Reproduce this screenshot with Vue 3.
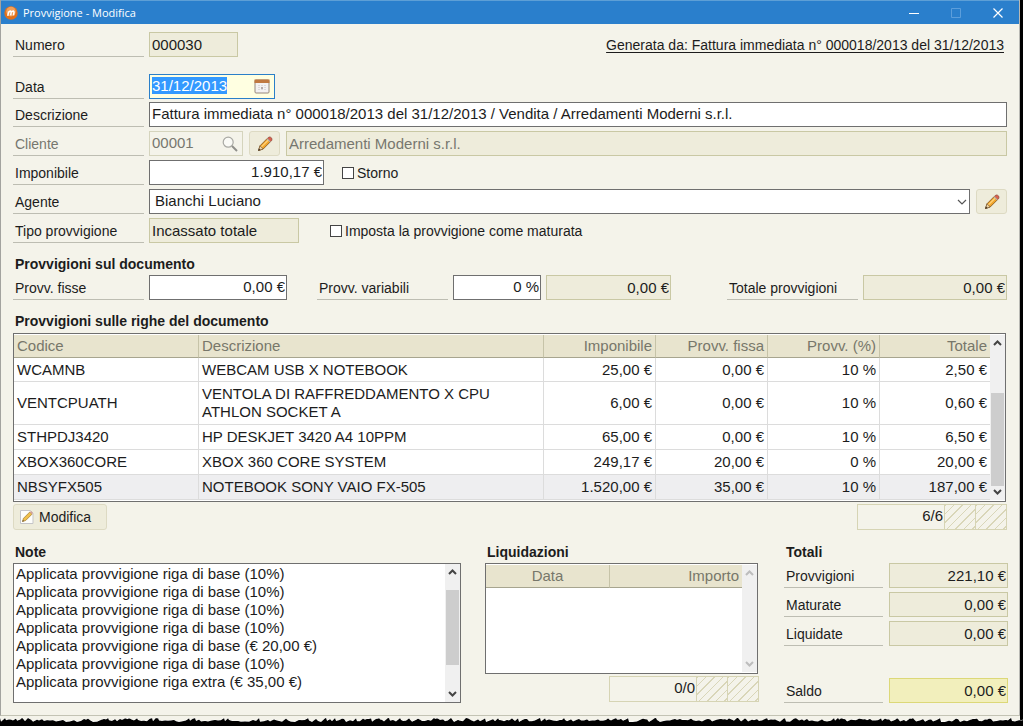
<script setup>
import { onMounted, ref } from 'vue'

const dateInput = ref(null)
const date = ref('31/12/2013')
const description = ref('Fattura immediata n° 000018/2013 del 31/12/2013 / Vendita / Arredamenti Moderni s.r.l.')
const taxable = ref('1.910,17 €')
const agent = ref('Bianchi Luciano')
const reversal = ref(false)
const matured = ref(false)
const fixedFee = ref('0,00 €')
const variableFee = ref('0 %')

const rows = [
  { code: 'WCAMNB', text: 'WEBCAM USB X NOTEBOOK', base: '25,00 €', fixed: '0,00 €', rate: '10 %', total: '2,50 €' },
  { code: 'VENTCPUATH', text: 'VENTOLA DI RAFFREDDAMENTO X CPU ATHLON SOCKET A', base: '6,00 €', fixed: '0,00 €', rate: '10 %', total: '0,60 €' },
  { code: 'STHPDJ3420', text: 'HP DESKJET 3420 A4 10PPM', base: '65,00 €', fixed: '0,00 €', rate: '10 %', total: '6,50 €' },
  { code: 'XBOX360CORE', text: 'XBOX 360 CORE SYSTEM', base: '249,17 €', fixed: '20,00 €', rate: '0 %', total: '20,00 €' },
  { code: 'NBSYFX505', text: 'NOTEBOOK SONY VAIO FX-505', base: '1.520,00 €', fixed: '35,00 €', rate: '10 %', total: '187,00 €', current: true },
]

const notes = ref([
  'Applicata provvigione riga di base (10%)',
  'Applicata provvigione riga di base (10%)',
  'Applicata provvigione riga di base (10%)',
  'Applicata provvigione riga di base (10%)',
  'Applicata provvigione riga di base (€ 20,00 €)',
  'Applicata provvigione riga di base (10%)',
  'Applicata provvigione riga extra (€ 35,00 €)',
].join('\n'))

const totals = [
  { id: 'tot-provvigioni', label: 'Provvigioni', value: '221,10 €' },
  { id: 'tot-maturate', label: 'Maturate', value: '0,00 €' },
  { id: 'tot-liquidate', label: 'Liquidate', value: '0,00 €' },
  { id: 'tot-saldo', label: 'Saldo', value: '0,00 €', balance: true },
]

// Ragged edge: uneven teeth along the bottom of the window.
function ragged(low, high) {
  let d = 'M0 9'
  for (let x = 0, i = 0; x <= 1023; i++) {
    const noise = Math.abs(Math.sin(i * 12.9898) * 43758.5453) % 1
    d += ` L${x} ${(low + noise * (high - low)).toFixed(1)}`
    x += 1 + Math.round(noise * 3)
  }
  return d + ' L1023 4 L1023 9 Z'
}
const tear = ragged(2, 6)

onMounted(() => {
  dateInput.value.focus()
  dateInput.value.select()
})
</script>

<template>
  <div class="screen">
    <main class="window">
      <header class="titlebar">
        <svg class="logo" viewBox="0 0 14 14" aria-hidden="true">
          <circle cx="7" cy="7" r="6.7" fill="#e0701c" />
          <circle cx="7" cy="5.6" r="4.8" fill="#f2a05a" />
          <path d="M3.8 9.8 L4.6 5.6 M4.5 6.6 Q6.8 3.8 7.2 6 L6.7 9.4 M7.1 6.6 Q9.8 3.8 10 6.2 L9.5 9.4" fill="none" stroke="#fff" stroke-width="1.5" />
        </svg>
        <h1>Provvigione - Modifica</h1>
        <button type="button" class="winbtn" aria-label="Riduci a icona">
          <svg viewBox="0 0 12 12"><path d="M1 6.5H11" stroke="#fff" fill="none" /></svg>
        </button>
        <button type="button" class="winbtn" aria-label="Ingrandisci" disabled>
          <svg viewBox="0 0 12 12"><path d="M1.5 1.5H10.5V10.5H1.5Z" stroke="#5c9edb" fill="none" /></svg>
        </button>
        <button type="button" class="winbtn" aria-label="Chiudi">
          <svg viewBox="0 0 12 12"><path d="M1.5 1.5L10.5 10.5M10.5 1.5L1.5 10.5" stroke="#fff" stroke-width="1.2" fill="none" /></svg>
        </button>
      </header>

      <form class="form" @submit.prevent>
        <div class="row first">
          <label class="lbl" for="numero">Numero</label>
          <input id="numero" class="box w-num" value="000030" readonly />
          <a class="source" href="#">Generata da: Fattura immediata n° 000018/2013 del 31/12/2013</a>
        </div>

        <div class="rows">
          <div class="row">
            <label class="lbl" for="data">Data</label>
            <div class="date">
              <input id="data" ref="dateInput" v-model="date" />
              <button type="button" class="bare" aria-label="Apri calendario">
                <svg width="16" height="15" viewBox="0 0 16 15">
                  <rect x="1" y="1" width="14" height="13" rx="1" fill="#f3f1f1" stroke="#96877c" />
                  <path d="M0.5 0.5H15.5V4H0.5Z" fill="#c07840" />
                  <path d="M4 6.5H12M4 8.5H12M4 10.5H12" stroke="#dcd8da" stroke-dasharray="2 1" />
                  <path d="M7 8H9V10H7Z" fill="#b3a9a9" />
                </svg>
              </button>
            </div>
          </div>
          <div class="row">
            <label class="lbl" for="descrizione">Descrizione</label>
            <input id="descrizione" v-model="description" class="box edit grow" />
          </div>
          <div class="row">
            <label class="lbl off" for="cliente">Cliente</label>
            <div class="lookup">
              <input id="cliente" value="00001" disabled />
              <button type="button" class="bare" aria-label="Cerca cliente" disabled>
                <svg width="16" height="16" viewBox="0 0 16 16">
                  <circle cx="6.2" cy="6.2" r="5" fill="#fafaf6" stroke="#a9a9a4" stroke-width="1.2" />
                  <path d="M10 10L15 15" stroke="#8f8f8b" stroke-width="2" />
                </svg>
              </button>
            </div>
            <button type="button" class="btn pen" aria-label="Modifica cliente">
              <svg width="16" height="16" viewBox="0 0 16 16">
                <path d="M1.5 14.5L3 9.8L10.3 2.4L13.6 5.6L6.2 13Z" fill="#f0a52c" stroke="#8a5a20" stroke-width="0.9" />
                <path d="M4.4 10.9L11.6 3.7" stroke="#ffd27a" stroke-width="1.3" />
                <path d="M10.3 2.4L12 1Q13.2 0.6 14.4 1.8Q15.4 3 14.8 4.3L13.6 5.6Z" fill="#d9604f" stroke="#8c4a3c" stroke-width="0.7" />
                <path d="M9.6 3.1L10.4 2.3L13.7 5.5L12.9 6.3Z" fill="#b9b4ad" />
                <path d="M1.5 14.5L3 9.8L6.2 13Z" fill="#eed3a2" stroke="#6c5030" stroke-width="0.6" />
                <path d="M1.2 14.8L2 12.4L3.6 14Z" fill="#3b3028" />
              </svg>
            </button>
            <input class="box grow off" value="Arredamenti Moderni s.r.l." aria-label="Nome cliente" disabled />
          </div>
          <div class="row">
            <label class="lbl" for="imponibile">Imponibile</label>
            <input id="imponibile" v-model="taxable" class="box edit num w-tax" />
            <label class="check storno"><input v-model="reversal" type="checkbox" />Storno</label>
          </div>
          <div class="row">
            <label class="lbl" for="agente">Agente</label>
            <div class="select grow">
              <select id="agente" v-model="agent">
                <option>Bianchi Luciano</option>
              </select>
              <svg width="10" height="6" viewBox="0 0 10 6" aria-hidden="true"><path d="M1 1L5 5L9 1" fill="none" stroke="#555" stroke-width="1.2" /></svg>
            </div>
            <button type="button" class="btn pen" aria-label="Modifica agente">
              <svg width="16" height="16" viewBox="0 0 16 16">
                <path d="M1.5 14.5L3 9.8L10.3 2.4L13.6 5.6L6.2 13Z" fill="#f0a52c" stroke="#8a5a20" stroke-width="0.9" />
                <path d="M4.4 10.9L11.6 3.7" stroke="#ffd27a" stroke-width="1.3" />
                <path d="M10.3 2.4L12 1Q13.2 0.6 14.4 1.8Q15.4 3 14.8 4.3L13.6 5.6Z" fill="#d9604f" stroke="#8c4a3c" stroke-width="0.7" />
                <path d="M9.6 3.1L10.4 2.3L13.7 5.5L12.9 6.3Z" fill="#b9b4ad" />
                <path d="M1.5 14.5L3 9.8L6.2 13Z" fill="#eed3a2" stroke="#6c5030" stroke-width="0.6" />
                <path d="M1.2 14.8L2 12.4L3.6 14Z" fill="#3b3028" />
              </svg>
            </button>
          </div>
          <div class="row">
            <label class="lbl" for="tipo">Tipo provvigione</label>
            <input id="tipo" class="box w-type" value="Incassato totale" readonly />
            <label class="check matured"><input v-model="matured" type="checkbox" />Imposta la provvigione come maturata</label>
          </div>
        </div>

        <h2>Provvigioni sul documento</h2>
        <div class="row">
          <label class="lbl" for="fisse">Provv. fisse</label>
          <input id="fisse" v-model="fixedFee" class="box edit num w-fix" />
          <label class="lbl second" for="variabili">Provv. variabili</label>
          <input id="variabili" v-model="variableFee" class="box edit num w-pct" />
          <input class="box num w-var" value="0,00 €" aria-label="Importo provvigioni variabili" readonly />
          <label class="lbl third" for="totale">Totale provvigioni</label>
          <input id="totale" class="box num w-sum" value="0,00 €" readonly />
        </div>

        <h2>Provvigioni sulle righe del documento</h2>
        <div class="grid lines">
          <table>
            <colgroup>
              <col class="c-code" /><col /><col class="c-num" /><col class="c-num" /><col class="c-num" /><col class="c-total" />
            </colgroup>
            <thead>
              <tr>
                <th>Codice</th><th>Descrizione</th><th class="num">Imponibile</th><th class="num">Provv. fissa</th><th class="num">Provv. (%)</th><th class="num">Totale</th>
              </tr>
            </thead>
            <tbody>
              <tr v-for="r in rows" :key="r.code" :class="{ current: r.current }">
                <td>{{ r.code }}</td><td>{{ r.text }}</td><td class="num">{{ r.base }}</td><td class="num">{{ r.fixed }}</td><td class="num">{{ r.rate }}</td><td class="num">{{ r.total }}</td>
              </tr>
            </tbody>
          </table>
          <div class="bar" aria-hidden="true">
            <svg width="9" height="6" viewBox="0 0 9 6"><path d="M1 5L4.5 1.5L8 5" /></svg>
            <div class="track t-lines"><div class="thumb" /></div>
            <svg width="9" height="6" viewBox="0 0 9 6"><path d="M1 1L4.5 4.5L8 1" /></svg>
          </div>
        </div>

        <div class="under">
          <button type="button" class="btn edit-btn">
            <svg width="16" height="16" viewBox="0 0 16 16" aria-hidden="true">
              <path d="M1.5 1.5H11.5L14 4V14.5H1.5Z" fill="#fdfdfb" stroke="#c5c5c8" />
              <path d="M3.5 12.5L4.5 9.3L10.8 3L13 5.2L6.7 11.5Z" fill="#f0c04c" stroke="#a98338" stroke-width="0.8" />
              <path d="M10.8 3L12 2L14 4L13 5.2Z" fill="#d5a197" />
              <path d="M3.3 12.7L3.9 10.9L5.1 12.1Z" fill="#55483a" />
            </svg>
            Modifica
          </button>
          <div class="pager"><span>6/6</span><i /><i /></div>
        </div>

        <div class="bottom">
          <section class="notes">
            <h2><label for="note">Note</label></h2>
            <div class="grid note-box">
              <textarea id="note" v-model="notes" />
              <div class="bar" aria-hidden="true">
                <svg width="9" height="6" viewBox="0 0 9 6"><path d="M1 5L4.5 1.5L8 5" /></svg>
                <div class="track t-notes"><div class="thumb" /></div>
                <svg width="9" height="6" viewBox="0 0 9 6"><path d="M1 1L4.5 4.5L8 1" /></svg>
              </div>
            </div>
          </section>

          <section class="payments">
            <h2>Liquidazioni</h2>
            <div class="grid pay-box">
              <div class="pay-area">
                <table>
                  <colgroup><col class="c-date" /><col /></colgroup>
                  <thead>
                    <tr><th class="mid">Data</th><th class="num">Importo</th></tr>
                  </thead>
                </table>
              </div>
              <div class="bar idle" aria-hidden="true">
                <svg width="9" height="6" viewBox="0 0 9 6"><path d="M1 5L4.5 1.5L8 5" /></svg>
                <div class="track" />
                <svg width="9" height="6" viewBox="0 0 9 6"><path d="M1 1L4.5 4.5L8 1" /></svg>
              </div>
            </div>
            <div class="pager"><span>0/0</span><i /><i /></div>
          </section>

          <section class="totals">
            <h2>Totali</h2>
            <div class="total-rows">
              <div v-for="t in totals" :key="t.id" class="row" :class="{ balance: t.balance }">
                <label class="lbl" :for="t.id">{{ t.label }}</label>
                <input :id="t.id" class="box num grow" :value="t.value" readonly />
              </div>
            </div>
          </section>
        </div>
      </form>
    </main>
    <svg class="tear" viewBox="0 0 1023 9" preserveAspectRatio="none" aria-hidden="true">
      <rect width="1020" height="9" fill="#f4f3ea" />
      <rect x="1020" width="3" height="9" fill="#000" />
      <path :d="tear" fill="#000" stroke="#fff" stroke-width="1" />
      <path :d="tear" fill="#000" />
    </svg>
  </div>
</template>

<style>
body {
  background: #000;
}
</style>

<style scoped>
.screen,
.screen * {
  box-sizing: border-box;
}
.screen {
  font-family: "Liberation Sans", Arial, sans-serif;
  font-size: 14px;
  color: #1c1c1c;
}
.window {
  margin-right: 3px;
  background: #f4f3ea;
  border-left: 1px solid #a3a39f;
  border-right: 1px solid #b9b9b4;
  border-bottom: 1px solid #c3c3b4;
}
.titlebar {
  display: flex;
  align-items: center;
  height: 24px;
  padding: 0 10px 0 3px;
  background: #2a7fcc;
  border-top: 1px solid #5d9fd6;
}
.logo {
  width: 14px;
  height: 14px;
  margin-right: 5px;
}
h1 {
  flex: 1;
  margin: 0;
  font: 400 11px/16px "Open Sans", "Noto Sans", sans-serif;
  color: #fff;
}
button {
  margin: 0;
  padding: 0;
  border: 0;
  font: inherit;
  color: inherit;
  background: none;
}
.winbtn {
  display: flex;
  align-items: center;
  justify-content: center;
  width: 22px;
  height: 22px;
  margin-left: 20px;
}
.winbtn svg {
  width: 12px;
  height: 12px;
}
.form {
  padding: 8px 12px 12px;
}
.row {
  display: flex;
  height: 25px;
}
.row.first {
  margin-bottom: 17px;
}
.rows {
  display: flex;
  flex-direction: column;
  gap: 4px;
}
.rows .row:first-child {
  margin-bottom: -1px;
}
.lbl {
  flex: none;
  width: 131px;
  margin-right: 5px;
  padding-left: 2px;
  border-bottom: 1px solid #bdbdb2;
  line-height: 26px;
  white-space: nowrap;
}
.off,
.lbl.off {
  color: #77776f;
}
.box {
  min-width: 0;
  height: 25px;
  margin: 0;
  padding: 0 1px 0 2px;
  border: 1px solid #c9c8a4;
  border-radius: 0;
  outline: 0;
  background: #eeecdb;
  font: 15px/18px "Liberation Sans", Arial, sans-serif;
  color: #1c1c1c;
}
.box.off {
  color: #77776f;
}
.box.edit {
  padding-bottom: 2px;
  border-color: #6f6f6f;
  background: #fff;
}
.num {
  text-align: right;
}
.grow {
  flex: 1;
}
.w-num { width: 89px; }
.w-tax { width: 175px; }
.w-type { width: 150px; }
.w-fix { width: 138px; }
.w-pct { width: 88px; }
.w-var { width: 125px; margin-left: 5px; }
.w-sum { width: 144px; }
.source {
  margin: 0 3px 0 auto;
  line-height: 26px;
  color: #1c1c1c;
  text-underline-offset: 2px;
}
.date,
.lookup {
  display: flex;
  align-items: center;
  height: 25px;
  padding: 0 4px 0 2px;
}
.date {
  width: 126px;
  border: 1px solid #2a7fc9;
  background: #ffffe1;
}
.lookup {
  width: 94px;
  border: 1px solid #d5d4bd;
}
.date input,
.lookup input {
  flex: 1;
  min-width: 0;
  height: 20px;
  padding: 0 0 2px;
  border: 0;
  outline: 0;
  background: none;
  font: 15px/18px "Liberation Sans", Arial, sans-serif;
  color: #1c1c1c;
}
.lookup input {
  color: #77776f;
}
.date input::selection {
  background: #3399ff;
  color: #fff;
}
.bare,
.bare svg {
  display: block;
}
.btn {
  display: flex;
  align-items: center;
  border: 1px solid #dddac3;
  border-radius: 3px;
  background: #eeecdb;
}
.pen {
  justify-content: center;
  width: 31px;
  margin: 0 6px;
}
.pen:last-child {
  margin-right: 0;
}
.check {
  display: flex;
  align-items: center;
  gap: 3px;
}
.storno { margin-left: 18px; }
.matured { margin-left: 31px; }
.check input {
  appearance: none;
  width: 12px;
  height: 12px;
  margin: 0;
  border: 1px solid #444;
  background: #fff;
}
.select {
  position: relative;
}
.select select {
  display: block;
  width: 100%;
  height: 25px;
  padding: 0 24px 2px 5px;
  appearance: none;
  border: 1px solid #6f6f6f;
  border-radius: 0;
  background: #fff;
  font: 15px/18px "Liberation Sans", Arial, sans-serif;
  color: #1c1c1c;
}
.select svg {
  position: absolute;
  top: 10px;
  right: 3px;
  pointer-events: none;
}
h2 {
  margin: 12px 0 2px;
  padding-left: 2px;
  font-size: 14px;
  line-height: 18px;
  font-weight: 700;
}
.lbl.second {
  margin-left: 30px;
}
.lbl.third {
  margin-left: auto;
}
.grid {
  display: flex;
  border: 1px solid #6f6f6f;
  background: #fff;
}
.lines {
  margin: 3px 1px 0 0;
  padding: 1px 0;
}
table {
  flex: 1;
  width: 100%;
  table-layout: fixed;
  border-collapse: separate;
  border-spacing: 0;
  font-size: 15px;
}
.c-code { width: 185px; }
.c-num { width: 112px; }
.c-total { width: 110px; }
.c-date { width: 124px; }
th,
td {
  height: 25px;
  padding: 0 3px;
  border-right: 1px solid #dcdcdc;
  border-bottom: 1px solid #dcdcdc;
  font-weight: 400;
  line-height: 18px;
  text-align: left;
}
th {
  height: 23px;
  border-color: #c6c3a8;
  border-bottom-color: #a7a58f;
  background: #e8e4ce;
  color: #77776a;
}
th.num,
td.num {
  text-align: right;
}
th.mid {
  text-align: center;
}
th:last-child,
td:last-child {
  border-right: 0;
}
tbody tr:nth-child(1) td {
  height: 24px;
}
tbody tr:nth-child(2) td {
  height: 43px;
}
.current td {
  background: #eeeef0;
}
.bar {
  display: flex;
  flex: none;
  flex-direction: column;
  align-items: center;
  width: 15px;
  padding: 5px 0;
  background: #f0f0f0;
}
.bar svg path {
  fill: none;
  stroke: #444;
  stroke-width: 2;
}
.bar.idle svg path {
  stroke: #bdbdbd;
}
.track {
  display: flex;
  flex: 1;
  flex-direction: column;
  width: 13px;
}
.thumb {
  background: #cdcdcd;
  flex: 1;
}
.t-lines {
  padding-top: 47px;
  padding-bottom: 3px;
}
.t-notes {
  padding-top: 15px;
  padding-bottom: 26px;
}
.under {
  display: flex;
  justify-content: space-between;
  margin-top: 2px;
}
.edit-btn {
  width: 94px;
  height: 26px;
  gap: 4px;
  padding-left: 5px;
}
.pager {
  display: flex;
  width: 150px;
  height: 26px;
  border: 1px solid #d6d4b4;
}
.pager span {
  flex: 1;
  padding-right: 1px;
  font-size: 15px;
  line-height: 21px;
  text-align: right;
}
.pager i {
  width: 31px;
  border-left: 1px solid #d6d4b4;
  background: repeating-linear-gradient(135deg, #d9d6b8 0 1px, #f4f3ea 1px 6px);
}
.bottom {
  display: flex;
  align-items: flex-start;
  margin-right: -1px;
  padding-top: 1px;
}
.notes {
  flex: 1;
}
.note-box {
  height: 140px;
}
textarea {
  flex: 1;
  min-width: 0;
  padding: 1px 2px;
  border: 0;
  outline: 0;
  resize: none;
  overflow: hidden;
  background: none;
  font: 15px/18px "Liberation Sans", Arial, sans-serif;
  color: #1c1c1c;
}
.payments {
  width: 274px;
  margin-left: 24px;
}
.pay-box {
  width: 273px;
  height: 111px;
  padding: 1px 0;
}
.pay-area {
  flex: 1;
}
.payments .pager {
  margin: 2px 0 0 auto;
}
.totals {
  width: 224px;
  margin: 0 0 0 25px;
}
.total-rows {
  display: flex;
  flex-direction: column;
  gap: 4px;
}
.totals .lbl {
  width: 99px;
  margin-right: 6px;
}
.balance {
  margin-top: 28px;
}
.balance .box {
  background: #f2efbc;
  border-color: #dcd878;
}
.tear {
  display: block;
  width: 100%;
  height: 9px;
}
</style>
